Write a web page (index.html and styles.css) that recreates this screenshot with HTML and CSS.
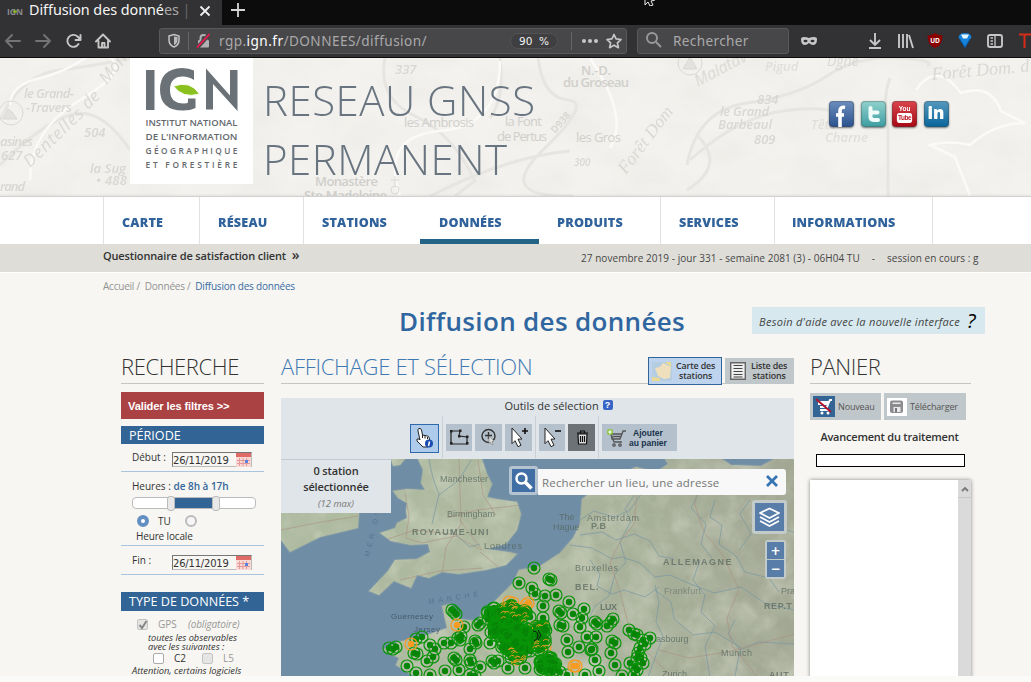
FILE: index.html
```html
<!DOCTYPE html>
<html lang="fr">
<head>
<meta charset="utf-8">
<title>Diffusion des données</title>
<link rel="stylesheet" href="styles.css">
</head>
<body>
<div class="tabs">
  <div class="tab">
    <svg class="favicon" width="18" height="11"><text x="0" y="9" font-size="9.500" textLength="16" lengthAdjust="spacingAndGlyphs" fill="#8a8c8e" font-weight="700">IGN</text><ellipse cx="8" cy="5.500" rx="2" ry="1.200" fill="#8cbf1f"/></svg>
    <span class="tab-title">Diffusion des donné<i>es</i> <b>|</b></span>
    <svg class="tab-close" width="12" height="12"><path d="M1.500 1.500l9 9M10.500 1.500l-9 9" stroke="#eee" stroke-width="1.800"/></svg>
  </div>
  <svg class="tab-new" width="14" height="14"><path d="M7 0v14M0 7h14" stroke="#d5d5d5" stroke-width="1.800"/></svg>
  <svg class="pointer" width="12" height="6" viewBox="0 0 12 6"><path d="M1-8V5l3-3 2 4 3-1-2-4 4-1z" fill="#111" stroke="#eee"/></svg>
</div>
<div class="toolbar">
  <svg class="navicons" width="120" height="32" viewBox="0 25 120 32" fill="none" stroke-width="1.900" stroke-linecap="round" stroke-linejoin="round">
    <g stroke="#737375"><path d="M20 41H6m6-6-6 6 6 6M36 41h14m-6-6 6 6-6 6"/></g>
    <g stroke="#c6c6c7"><path d="M78.500 44a6 6 0 1 1-1-7.500l2.500 2.500M80.500 35v5h-5"/><path d="M96 41.500l7-7 7 7M98.500 41v6.500h9.500V41M102 47v-4h2.500v4"/></g>
  </svg>
  <div class="urlbar">
    <svg width="50" height="26" viewBox="160 28 50 26" fill="none"><path d="M169 36l5-1.500 5 1.500v4q0 5-5 7-5-2-5-7z" stroke="#c4c4c5" stroke-width="1.500"/><path d="M174 36.500v8.500q3.500-1.500 3.500-5v-3z" fill="#bbb"/><path d="M188.500 32v18" stroke="#666669"/><rect x="198" y="40" width="11" height="7.500" rx="1" fill="#b1b1b3"/><path d="M200.500 40v-2a3 3 0 0 1 6 0v2" stroke="#b1b1b3" stroke-width="2"/><path d="M197 48L209.500 34" stroke="#474749" stroke-width="4"/><path d="M197 47.500L209.500 34" stroke="#f4164f" stroke-width="1.700"/></svg>
    <span class="url">rgp.<b>ign.fr</b>/DONNEES/diffusion/</span>
    <span class="zoom">90&nbsp; %</span>
    <svg class="urlend" width="56" height="26" viewBox="568 28 56 26"><path d="M571.500 32v18" stroke="#666669"/><g fill="#c6c6c7"><circle cx="584" cy="41" r="2"/><circle cx="590" cy="41" r="2"/><circle cx="596" cy="41" r="2"/></g><path d="M614 34.500l2.100 4.400 4.900.6-3.600 3.300 1 4.900-4.400-2.500-4.400 2.500 1-4.900-3.600-3.300 4.900-.6z" fill="none" stroke="#c6c6c7" stroke-width="1.700" stroke-linejoin="round"/></svg>
  </div>
  <div class="searchbar"><svg width="18" height="18" fill="none" stroke="#98989a" stroke-width="2"><circle cx="7" cy="7" r="5"/><path d="M11 11l5 5"/></svg><span>Rechercher</span></div>
  <svg class="extras" width="241" height="32" viewBox="790 25 241 32" fill="none" stroke="#c6c6c7" stroke-width="1.900">
    <path d="M801 39q0-2 3-2 3 0 5 1 2-1 5-1 3 0 3 2 0 6-4 6-2 0-4-2-2 2-4 2-4 0-4-6z" fill="#c6c6c7" stroke="none"/><ellipse cx="805.500" cy="41" rx="2" ry="1.200" fill="#323234" stroke="none"/><ellipse cx="812.500" cy="41" rx="2" ry="1.200" fill="#323234" stroke="none"/>
    <path d="M875 33v12m-5-5 5 5 5-5M869 48h12M899 34v14M903 34v14M907 34v14M909 35l4 13"/>
    <path d="M935 33q4 2.500 7.500 2.500 0 10-7.500 12.500-7.500-2.500-7.500-12.500Q931 35.500 935 33z" fill="#8a0000" stroke="none"/><text x="935" y="43" text-anchor="middle" font-size="6.500" font-weight="700" fill="#fff" stroke="none">UD</text>
    <path d="M958.500 37q1-4 6.500-4t6.500 4l-6.500 11z" fill="#1682db" stroke="none"/><path d="M961 34.500h8l-2 4h-4z" fill="#e6f6ff" stroke="none"/><path d="M959.500 39l5.500 8.500 5-8.500" stroke="#075098" stroke-width="1"/>
    <rect x="988" y="35" width="14" height="12" rx="2"/><path d="M995 35v12M990.500 38h2.500M990.500 41h2.500M990.500 44h2.500" stroke-width="1.300"/>
    <path d="M1019 34.500h12M1024.500 34v14" stroke="#d72b18" stroke-width="2"/>
  </svg>
</div>
<header class="banner">
  <svg class="relief" width="1031" height="138" viewBox="0 58 1031 138" aria-hidden="true">
    <defs><filter id="paper" x="0" y="0" width="100%" height="100%"><feTurbulence type="fractalNoise" baseFrequency=".018 .03" numOctaves="4" seed="6"/><feColorMatrix values="0 0 0 0 .5  0 0 0 0 .5  0 0 0 0 .47  .6 0 0 0 -.22"/></filter></defs>
    <rect y="58" width="1031" height="138" fill="#f3f2ee"/><rect y="58" width="1031" height="138" filter="url(#paper)" opacity=".3"/>
    <g fill="none" stroke="#e6e5e1" stroke-width="3"><path d="M0 120Q20 75 60 70T130 58M0 165Q40 125 70 115T130 150M385 58q-8 40 30 58t60 65l-20 15M500 58q5 40-10 60M538 58q5 40 30 42t-25 50 30 46M430 196q80-40 140-45M687 165q10-55 60-62t80-27 70-18 30 8M890 78q-8 20-2 50v68"/><path d="M690 160q50-45 100-50t50 10M687 190q40-25 10-55"/></g>
    <g fill="none" stroke="#fbfaf8" stroke-width="2.500"><path d="M10 105Q10 85 40 78t60-30M30 180Q30 130 80 100t30-42M400 196q-20-60 40-65t60-70M916 90q20-30 45 3 30-10 40 18l24 12q-30 0-55 22-20-5-40 0l25 12 15 39M590 58q40 60 20 90"/></g>
    <g fill="#d4d3cf" font-style="italic" font-size="13" font-weight="600" opacity=".85"><text x="24" y="98" textLength="50">le Grand-</text><text x="26" y="112" textLength="46">-Travers</text><text x="84" y="137">504</text><text x="1" y="160">627</text><text x="96" y="185" textLength="31">• 488</text><text x="90" y="173" textLength="36">la Sug</text><text x="0" y="191" textLength="25">rand</text><text x="0" y="146" textLength="33">asines</text><text x="395" y="74">337</text><text x="757" y="104">834</text><text x="720" y="116" textLength="49">le Grand</text><text x="718" y="129" textLength="54">Barbeaul</text><text x="754" y="144">809</text><text x="574" y="166" font-size="10">300</text><text x="765" y="71" opacity=".7">Pigud</text><text x="811" y="129" opacity=".7">Tête</text><text x="825" y="142" opacity=".7">Charne</text></g>
    <g fill="#d0cfcb" font-size="13" font-weight="600"><text x="581" y="75" textLength="30">N.-D.</text><text x="563" y="87" textLength="66">du Groseau</text><text x="404" y="127" font-weight="400" textLength="70">les Ambrosis</text><text x="505" y="126" font-weight="400" textLength="37">la Font</text><text x="497" y="141" font-weight="400" textLength="50">de Pertus</text><text x="576" y="142" font-weight="400" textLength="45">les Gros</text><text x="315" y="186" textLength="63">Monastère</text><text x="304" y="200" textLength="83">Ste-Madeleine</text></g>
    <g fill="#cfcecA" font-style="italic" font-size="17" opacity=".7"><text transform="translate(30 168) rotate(-44)" letter-spacing="1">Dentelles</text><text transform="translate(88 110) rotate(-44)">de</text><text transform="translate(107 85) rotate(-52)">Mont</text><text transform="translate(626 175) rotate(-53)" font-family="Liberation Serif" font-size="18">Forêt Dom</text><text transform="translate(698 87) rotate(-28)" font-size="16">Malatav</text><text transform="translate(932 80) rotate(-5)" textLength="98" font-family="Liberation Serif" font-size="18">Forêt Dom. d</text><text x="827" y="66" font-size="14">Dgne</text><text transform="translate(555 134) rotate(-48)" font-size="10" font-style="normal" font-weight="700">D938</text></g>
    <g fill="#e3e2de" stroke="#d9d8d4"><circle cx="11" cy="113" r="12" fill="none"/><path d="M3 119l5-10 4 3 5 7z"/><circle cx="690" cy="63" r="12" fill="none"/><path d="M683 69l7-12 7 12z"/><circle cx="395" cy="190" r="4" fill="none"/><path d="M395 176v10M391 180h8"/></g>
  </svg>
  <div class="brand">
    <svg width="123" height="126" viewBox="130 58 123 126" fill="#6b7277"><path d="M146 70h8.500v40H146zM206 68.500l24 27V70h7.500v41L213 84v25.500h-7z"/><path d="M194 80q-5-3.500-11-3.500-13 0-13 13.500t14 13.500q3 0 4-1V98.500h7.500v9.500q-5 2.500-12.500 2.500-23 0-23-21 0-20.500 22-21.500 7 0 12 2.500z"/><path d="M173.500 86q17-6 26 8-17 5-26-8z" fill="#8bc11f" stroke="#fff" stroke-width="1"/><g class="brand-lines"><text x="145.500" y="126.200" textLength="92" lengthAdjust="spacingAndGlyphs">INSTITUT NATIONAL</text><text x="145.500" y="140" textLength="92" lengthAdjust="spacingAndGlyphs">DE L'INFORMATION</text><text x="145.500" y="153.700" textLength="92">GÉOGRAPHIQUE</text><text x="145.500" y="167.500" textLength="92">ET FORESTIÈRE</text></g></svg>
  </div>
  <h1>RESEAU GNSS<br>PERMANENT</h1>
  <div class="social">
    <span class="facebook"><svg width="25" height="26"><path d="M16 6.500q-5-1-5 3.500v16M7 14h8" fill="none" stroke="#fff" stroke-width="3.600"/></svg></span>
    <span class="twitter"><svg width="25" height="26"><path d="M9.500 7v9q0 3 4 3h3.500M9.500 11.500h7" fill="none" stroke="#effcfa" stroke-width="4" stroke-linecap="round"/></svg></span>
    <span class="youtube"><i>You</i><em>Tube</em></span>
    <span class="linkedin">in</span>
  </div>
</header>
<nav class="menu"><a class="m1">CARTE</a><a class="m2">RÉSEAU</a><a class="m3">STATIONS</a><a class="m4 active">DONNÉES</a><a class="m5">PRODUITS</a><a class="m6">SERVICES</a><a class="m7">INFORMATIONS</a></nav>
<div class="infobar"><b>Questionnaire de satisfaction client <span>»</span></b><p><span class="date">27 novembre 2019 - jour 331 - semaine 2081 (3) - 06H04 TU</span><span class="dash">-</span><span class="session">session en cours : g</span></p></div>
<main>
  <div class="crumbs"><span>Accueil / &nbsp;Données / &nbsp;</span><a>Diffusion des données</a></div>
  <div class="heading"><h2>Diffusion des données</h2><div class="help"><span>Besoin d'aide avec la nouvelle interface</span><b>?</b></div></div>
  <div class="columns">
    <aside class="filters">
      <h3>RECHERCHE</h3>
      <button class="apply">Valider les filtres &gt;&gt;</button>
      <h4>PÉRIODE</h4>
      <div class="daterow"><label>Début :</label><div class="date-input"><span>26/11/2019</span><svg width="15" height="14"><path fill="#f9d9d6" d="M0 0h15v14H0z"/><path fill="#e06a66" d="M0 0h15v4H0z"/><path d="M1 7.500h13M1 10.500h13M3.500 5v8M7 5v8M10.500 5v8" stroke="#e39a98"/><path fill="#5a83df" d="M9 7h3v3H9z"/></svg></div></div>
      <div class="hours"><p>Heures : <b>de 8h à 17h</b></p><div class="slider"><i></i><s></s><s></s></div>
      <div class="radios"><span class="radio on"></span><label>TU</label><span class="radio"></span></div><p class="local">Heure locale</p></div>
      <div class="daterow end"><label>Fin :</label><div class="date-input"><span>26/11/2019</span><svg width="15" height="14"><path fill="#f9d9d6" d="M0 0h15v14H0z"/><path fill="#e06a66" d="M0 0h15v4H0z"/><path d="M1 7.500h13M1 10.500h13M3.500 5v8M7 5v8M10.500 5v8" stroke="#e39a98"/><path fill="#5a83df" d="M9 7h3v3H9z"/></svg></div></div>
      <h4 class="types">TYPE DE DONNÉES *</h4>
      <div class="gps"><span class="check off"><svg width="10" height="10"><path d="M1.500 5l2.500 3 4.500-7" fill="none" stroke="#888" stroke-width="2"/></svg></span><label>GPS</label><em>(obligatoire)</em></div>
      <p class="note">toutes les observables<br>avec les suivantes :</p>
      <div class="signals"><span class="check"></span><label>C2</label><span class="check off"></span><label class="dim">L5</label></div>
      <p class="warn">Attention, certains logiciels</p>
    </aside>
    <section class="display">
      <div class="section-head"><h3>AFFICHAGE ET SÉLECTION</h3>
        <button class="view chosen"><svg width="20" height="19"><path fill="#b5cde0" d="M0 0h20v19H0z"/><path d="M3 6l5-1 3-4 8 4-1 11-6 1-6-3z" fill="#f0dfbd"/><path d="M0 15l8 1v3H0zM13 0h6v5z" fill="#ead991"/></svg><span>Carte des<br>stations</span></button>
        <button class="view"><svg width="16" height="18"><path d="M.7.700h14.600v16.600H.7z" fill="#eee" stroke="#666" stroke-width="1.400"/><path d="M3.500 3.500h9M3.500 6.500h9M3.500 9.500h9M3.500 12.500h9M3.500 15h9" stroke="#444" stroke-width="1.200"/></svg><span>Liste des<br>stations</span></button>
      </div>
      <div class="tools">
        <p>Outils de sélection <i>?</i></p>
        <div class="toolrow">
          <button class="tool info"><svg width="27" height="27"><path d="M8 3.500q2-.5 2.500 1.500l1 5 5 1q2 1 2 3l.5 5-2 3h-5l-6-6q-1-3 2-2l1 1L7 6q-.5-2 1-2.500z" fill="#fff" stroke="#222"/><path d="M11.500 10v3M14 11v2.500M16.500 12v2" stroke="#222"/><circle cx="18" cy="18.500" r="4" fill="#194cae"/><path d="M18.500 16.500l-1 4.500" stroke="#fff" stroke-width="1.500"/></svg></button>
          <i class="sep"></i>
          <button class="tool poly"><svg width="26" height="27" stroke="#222" fill="none"><path d="M5 7h9l-1 5 8 1v7H5z" stroke-width="1.200"/><g fill="#222" stroke="none"><path d="M4 6h2.500v2.500H4zM13 5.500h2.500V8H13zM12 11h2.500v2.500H12zM20 11.500h2.500V14H20zM20 18h2.500v2.500H20zM4 18h2.500v2.500H4z"/></g></svg></button>
          <button class="tool circ"><svg width="27" height="27" fill="none" stroke="#333" stroke-width="1.400"><circle cx="13.500" cy="12" r="6.500"/><path d="M13.500 8v7M10 11.500h7"/><path d="M14 12l5 5-2 .5 1 3-2-.5-1-2-1 1z" fill="#ddd" stroke="#888" stroke-width=".7"/></svg></button>
          <button class="tool plus"><svg width="27" height="27"><path d="M7 4l10 11-4 .2 3 6-3 1.500-3-6-3 3z" fill="#fff" stroke="#222"/><path d="M17 7h6M20 4v6" stroke="#111" stroke-width="1.600"/></svg></button>
          <i class="sep"></i>
          <button class="tool minus"><svg width="26" height="27"><path d="M6 4l10 11-4 .2 3 6-3 1.500-3-6-3 3z" fill="#fff" stroke="#222"/><path d="M16 7h6" stroke="#111" stroke-width="1.600"/></svg></button>
          <button class="tool trash"><svg width="27" height="27" fill="none" stroke="#111" stroke-width="1.200"><path d="M10 10h9l-.5 10h-8z" fill="#ddd"/><path d="M9 9h11M12.500 8.500V7h4v1.500M12.500 12v6M14.500 12v6M16.500 12v6"/></svg></button>
          <i class="sep"></i>
          <button class="tool add"><svg width="22" height="22" fill="none" stroke="#555" stroke-width="1.300"><path d="M5 7h11l-2 5H6zM5 7l3 8h8M16 7l1-3h3M7 9.500h8"/><circle cx="8" cy="18" r="1.200"/><circle cx="14" cy="18" r="1.200"/><circle cx="4" cy="5" r="3" fill="#8cc63c" stroke="none"/><path d="M4 3.200v3.600M2.200 5h3.600" stroke="#fff" stroke-width="1.200"/></svg><span>Ajouter<br>au panier</span></button>
        </div>
      </div>
      <div class="map">
        <svg id="map" width="513" height="217" viewBox="281 459 513 217">
          <defs><linearGradient id="ground"><stop stop-color="#aebba0"/><stop offset=".45" stop-color="#adb89e"/><stop offset=".75" stop-color="#a6ae98"/><stop offset="1" stop-color="#a2a793"/></linearGradient>
          <filter id="terrain" x="0" y="0" width="100%" height="100%"><feTurbulence type="fractalNoise" baseFrequency=".05" numOctaves="5" seed="12"/><feColorMatrix values="0 0 0 0 .52  0 0 0 0 .57  0 0 0 0 .46  2.300 0 0 0 -.9"/></filter>
          <filter id="hills" x="0" y="0" width="100%" height="100%"><feTurbulence type="fractalNoise" baseFrequency=".035" numOctaves="4" seed="31"/><feColorMatrix values="0 0 0 0 .8  0 0 0 0 .83  0 0 0 0 .72  0 2.400 0 0 -1.050"/></filter>
          <clipPath id="land"><path id="coast" d="M418 459l5 11-2 13 4 7-18-1-14 2 5 7 9 5-1 8 1 7-10 5-2 5-15 5 11 8 20 4 17-1 2 8-13 7-22 1-7 11-19 20 10 4 15-14 17 7 6-13 12 3 13-6 17 2 27-4 20-5 11-11-8-2-23-3 20-5 11-14 4-16-4-12-21-3-9-2 5-13-5-10-6-18zM281 513h78l-1 15-38 9-30 15-9-12zM391 459h14l-5 6-7 1zM665 459l3 5-12 8-20-5-20 9-20 12-14 11-2 25-7 14-13 15-20 13-21 4-6 13-20 20-10 8-6 10-17-2-10-15-8 2 5 22-23 8-26 6-15 8 16 8-3 7 14 9 8 3h387V459h-31l-13 7-30-1-9-6z"/></clipPath></defs>
          <rect x="281" y="459" width="513" height="217" fill="#6f8da5"/>
          <use href="#coast" fill="url(#ground)" stroke="#8299a6" stroke-width="2"/>
          <g clip-path="url(#land)"><rect x="281" y="459" width="513" height="217" fill="url(#ground)"/><rect x="281" y="459" width="513" height="217" filter="url(#terrain)" opacity=".32"/><rect x="281" y="459" width="513" height="217" filter="url(#hills)" opacity=".35"/>
            <g fill="none" stroke="#7897a3" stroke-width=".9" opacity=".75"><path d="M429 459q3 20 10 35l-7 30M439 495l20-15 12-20M450 530l20 17 10-3M580 520l14-9 20 6 16-7 12-17 11 2 10-14 18 3 27-13M580 535l22-3 14 8 18-6 16 7 9 15 15 3M570 545l22 3 20 11 10-2 18 6 15 14 15-2 18 8 26 10 27-6 25 17 28 6M626 562l-6-20 11-21-6-12 15-22 5-20M626 562l-11 12-6 22-14 10-9 18M655 585l4 17-3 20 7 14-15 41M655 590l16 12 3 17 19 16 22-3 28 17 15-7 36 2M700 560l-7 20 12 15-4 17 14 14-10 20 5 32M715 500l-5 17 12 8-3 19 17 12 9 16 24 6 10 14M752 522l42 10M590 560l10 14-3 12 15 8 12-4 21 7 14-10M735 620l-7 14 12 16-5 26M690 470l10 20-9 18 15 16-5 20 11 14M750 500l-10 14 11 20-12 16"/></g>
            <g fill="none" stroke="#ab8b7d" stroke-width=".9" opacity=".6"><path d="M405 493l4 23-3 22 16 5 34-7 25 14M459 459l2 65-15 23-4 28M447 518l30-8 45-5M385 540l30-10 45 5M400 580l40-9 42-3M480 552l22 18M460 520l22 30M478 460l5 35 13 20M281 530l35-7 42-7M634 459l3 35-3 30-14 18-10 20 10 30 8 31 11 21 34 34M659 650l30 8 38-6 68-18M700 475l-5 30 9 27 18 22 17 35-12 29 5 28 25 30"/></g>
          </g>
          <g class="places"><text x="440" y="482" textLength="48">Manchester</text><text x="447" y="517" textLength="48">Birmingham</text><text x="412" y="535" class="country" textLength="77">ROYAUME-UNI</text><text x="484" y="549" textLength="38">Londres</text><text x="559" y="520">The</text><text x="553" y="530">Hague</text><text x="587" y="521" textLength="52">Amsterdam</text><text x="591" y="529" class="country">P.B</text><text x="575" y="571" textLength="43">Bruxelles</text><text x="575" y="590" class="country" textLength="24">BEL.</text><text x="600" y="610" textLength="17" font-weight="700">LUX</text><text x="663" y="565" class="country" textLength="69">ALLEMAGNE</text><text x="664" y="594" textLength="37" opacity=".7">Frankfurt</text><text x="656" y="642">asbourg</text><text x="721" y="656" textLength="31">Munich</text><text x="764" y="609" class="country">REP.T</text><text x="781" y="594">Pra</text><text x="769" y="678" class="country">AUT</text><text x="662" y="677">Zurich</text><text x="391" y="619" textLength="42" class="island">Guernesey</text><text x="414" y="632" textLength="26" class="island">Jersey</text><text transform="translate(429 604) rotate(-9)" class="sea" textLength="54">MANCHE</text><text transform="translate(369 557) rotate(-76)" class="sea">MER D'IR</text></g>
          <g id="stations"></g>
        </svg>
        <div class="count"><b>0 station<br>sélectionnée</b><em>(12 max)</em></div>
        <div class="finder"><span class="lens"><svg width="23" height="23" fill="none" stroke="#fff"><circle cx="9.500" cy="9.500" r="5" stroke-width="2.500"/><path d="M13.500 13.500l6 6" stroke-width="3.500"/></svg></span><span class="field">Rechercher un lieu, une adresse<svg class="clear" width="14" height="14"><path d="M2 2l10 10M12 2L2 12" stroke="#3774b4" stroke-width="2.800"/></svg></span></div>
        <div class="layers"><svg width="29" height="28" fill="none" stroke="#fff" stroke-width="1.800" stroke-linejoin="round"><path d="M14.500 5.500L24 10l-9.500 5L5 10zM5 14l9.500 5 9.500-5M5 18l9.500 5 9.500-5"/></svg></div>
        <div class="zoomer"><span>+</span><span>−</span></div>
      </div>
    </section>
    <aside class="basket">
      <h3>PANIER</h3>
      <div class="actions"><button><svg width="22" height="21"><path fill="#326496" d="M0 0h22v21H0z"/><path d="M5 6h11l-2 5H7M16 6l1-2h2M7 14h9M5 8h11" stroke="#fff" stroke-width="2" fill="none"/><circle cx="9" cy="17" r="1.500" fill="#fff"/><circle cx="15" cy="17" r="1.500" fill="#fff"/><path d="M3 3l15 13" stroke="#b0172c" stroke-width="2"/></svg><span>Nouveau</span></button><button class="save"><svg width="20" height="18"><path fill="#fff" d="M0 0h20v18H0z"/><rect x="3" y="2.500" width="13" height="12.500" rx="2" fill="#8c8c90"/><path d="M5.500 4.500h8v1.500h-8zM6.500 9h7v5h-7z" fill="#e9e9e9"/><path d="M8 10h2v4H8z" fill="#77777b"/></svg><span>Télécharger</span></button></div>
      <h5>Avancement du traitement</h5><div class="progress"></div>
      <div class="items"><div class="scroll"><svg width="13" height="18"><path d="M4 11l3-3 3 3" fill="none" stroke="#777" stroke-width="1.800"/></svg></div></div>
    </aside>
  </div>
</main>
<script src="stations.js"></script>
</body>
</html>
```
FILE: styles.css
```css
*{box-sizing:border-box}
body{margin:0;width:1031px;height:682px;overflow:hidden;background:#fafaf9;font-family:"Open Sans","Noto Sans",sans-serif;color:#333}
h1,h2,h3,h4,h5,p{margin:0;font-weight:400}
button{border:0;padding:0;margin:0;font:inherit;color:inherit}
svg{display:block;flex:none}
b{font-weight:600}
.tabs{height:25px;background:#0c0c0d;display:flex;position:relative}
.tab{width:222px;background:#323234;display:flex;align-items:flex-start;padding-left:7px}
.favicon{margin-top:6px}
.tab-title{font:14.4px/20px "Noto Sans",sans-serif;color:#f5f5f5;margin-left:4px;width:163px;white-space:nowrap;letter-spacing:-.06px}
.tab-title i{font-style:normal;color:#aaa}
.tab-title b{font-weight:400;color:#666}
.tab-close{margin:5px 0 0 7px}
.tab-new{margin:3px 0 0 9px}
.pointer{position:absolute;left:644px;top:0}
.toolbar{height:33px;background:#323234;border-bottom:1px solid #0c0c0d;display:flex}
.urlbar{margin:3px 0 0 39px;width:468px;height:26px;border:1px solid #59595b;border-radius:3px;background:#474749;display:flex;align-items:center}
.url{font:13.6px/24px "Noto Sans",sans-serif;color:#a9a9aa;margin-left:9px;width:291px;letter-spacing:.44px}
.url b{font-weight:400;color:#fff}
.zoom{width:48px;height:16px;border-radius:8px;background:#3f3f41;border:1px solid #535355;color:#f3f3f3;font:10.5px/14px "DejaVu Sans",sans-serif;text-align:center}
.urlend{margin-left:10px}
.searchbar{margin:3px 0 0 10px;width:152px;height:26px;border:1px solid #59595b;border-radius:3px;background:#474749;display:flex;align-items:center;padding-left:7px;gap:10px;color:#a9a9aa;font:13.6px "Noto Sans",sans-serif;letter-spacing:.35px;padding-bottom:2px}
.extras{margin-left:1px}
.banner{height:138px;position:relative;display:flex;padding-left:130px}
.relief{position:absolute;left:0;top:0}
.brand{width:123px;height:126px;background:#fff;position:relative}
.brand-lines{font-size:8.3px;font-weight:600;fill:#64696d}
.banner h1{position:relative;margin:12px 0 0 10px;width:566px;font-weight:300;font-size:42px;line-height:59px;color:#687480;letter-spacing:.5px}
.social{position:relative;display:flex;gap:6.500px;margin-top:43px}
.social span{width:25px;height:26px;border-radius:4px;overflow:hidden;box-shadow:inset 0 0 1px 1px #4445,0 1px 2px #777}
.facebook{background:linear-gradient(#6c8ebd,#2b528e)}
.twitter{background:linear-gradient(#91d2cd,#3e9da2)}
.youtube{background:linear-gradient(#d9454d,#a90814);color:#fff;text-align:center;font:700 8px/9px "Liberation Sans",sans-serif;padding-top:3px}
.youtube i,.youtube em{display:block;font-style:normal;transform:scaleX(.8)}
.youtube em{background:#fff;color:#bb1724;border-radius:3px;margin:0 3px;font-size:8px;line-height:10px;letter-spacing:-.5px;height:10px}
.linkedin{background:linear-gradient(#5699bf,#08659a);color:#fff;text-align:center;font-weight:800;font-size:17px;line-height:24px}
.menu{height:48px;background:#fff;border-top:1px solid #d2d1ce;box-shadow:0 -1px 2px #0001;position:relative;display:flex;padding-left:103px;font-weight:800;font-size:12.6px;letter-spacing:.2px;color:#30629b}
.menu a{border-left:1px solid #e2e2e2;padding:17px 0 0 18px;line-height:18px;height:47px}
.m1{width:96px}.m2{width:104px}.m3{width:117px}.m4{width:119px}.m5{width:121px}.m6{width:114px}.m7{width:159px;border-right:1px solid #e2e2e2}
.menu .m5{border-left:0;padding-left:18px}
.menu .m7{padding-left:17px}
.menu .active{border-bottom:5px solid #226386;border-left:0;padding-left:19px}
.infobar{height:28px;background:#deddd8;display:flex;padding:0 0 0 103px;font-size:10.5px;line-height:24px;white-space:nowrap;color:#474747}
.infobar b{width:478px;font-size:11px;color:#333;letter-spacing:-.15px}
.infobar b span{font-size:14px;line-height:12px;margin-left:3px}
.infobar p{font-size:10px;line-height:29px;display:flex}
.infobar .date,.infobar .session{letter-spacing:.05px}
.dash{margin:0 12px}
main{height:404px;background:#f7f6f2;border-top:1px solid #fff;overflow:hidden}
.crumbs{font-size:10px;line-height:14px;margin:6px 0 0 103px;color:#929292;height:14px;letter-spacing:-.22px}
.crumbs a{color:#376ca4}
.heading{height:54px;display:flex;padding-left:399px;margin-top:13px}
.heading h2{width:353px;color:#3066a0;font-weight:600;font-size:26px;line-height:30px;letter-spacing:.34px}
.help{background:#d7e9ef;width:233px;height:27px;display:flex;align-items:center;padding-left:7px;font-size:11px;font-style:italic;color:#444;white-space:nowrap;margin-top:1px}
.help span{width:208px;letter-spacing:.28px;padding-top:2px}.help b{font-size:20px;font-weight:500;line-height:26px;color:#000}
.columns{display:grid;grid-template-columns:143px 513px 161px;column-gap:17px;padding-left:121px}
.basket{margin-left:-1px;width:161px}
h3{font-size:22px;font-weight:300;height:24px;line-height:24px;border-bottom:1px solid #c5c5c2;white-space:nowrap;letter-spacing:-.4px}
.columns h3{margin-top:-6px;height:30px}
.apply{display:block;width:143px;height:27px;margin-top:8px;background:#aa4143;color:#fff;font:700 11.1px/28px "Liberation Sans",sans-serif;text-align:left;padding-left:7px;letter-spacing:-.13px}
h4{background:#326496;color:#fff;height:18px;font-size:12.600px;line-height:19px;padding-left:8px;margin-top:7px}
.daterow{height:28px;border-bottom:1px solid #a9c4df;display:flex;padding:8px 0 0 11px;font-size:10px}
.daterow label{width:40px;line-height:13px}
.date-input{width:80px;height:15px;border:1px solid #777;border-right-color:#bbb;border-bottom-color:#bbb;display:flex;font:10px/16px "DejaVu Sans",sans-serif;letter-spacing:-.2px}
.date-input span{width:64px}
.hours{height:74px;border-bottom:1px solid #a9c4df;padding:7px 0 0 11px;font-size:10px;line-height:14px}
.hours b{color:#336699;letter-spacing:-.02px}
.slider{width:124px;height:12px;border:1px solid #bbb;border-radius:4px;background:#fff;position:relative;margin-top:4px}
.slider i{position:absolute;left:39px;width:44px;height:10px;background:#326496}
.slider s{position:absolute;left:34px;top:-2px;width:8px;height:15px;border:1px solid #bbb;border-radius:3px;background:#e8e8e8}
.slider s+s{left:79px}
.radios{display:flex;height:18px;margin-top:3px;padding-left:5px;align-items:center}
.radios label{width:27px;margin-left:9px}
.radio{width:12px;height:12px;border-radius:50%;border:2px solid #bbb;background:#f6f6f6}
.radio.on{border:4px solid #648fc2;background:#fff}
.hours .local{padding-left:4px;margin-top:-1px;letter-spacing:-.15px}
.daterow.end{height:29px;padding-top:9px}
.daterow label{position:relative;top:-1px}
h4.types{margin-top:17px;height:19px;line-height:20px}
.gps{display:flex;align-items:center;height:20px;margin-top:3px;padding-left:16px;font-size:10px;color:#999}
.check{width:11px;height:11px;border:1px solid #aaa;background:#fff;border-radius:2px}
.check.off{background:#e5e5e3;border-color:#c4c4c4}
.gps label{width:30px;margin-left:10px}
.gps em{letter-spacing:-.15px}
.note{font-size:9.2px;font-style:italic;line-height:9px;padding-left:27px;height:18px;margin-top:-1px}
.signals{display:flex;align-items:center;height:14px;padding-left:32px;font-size:10px}
.signals label{width:28px;margin-left:10px}.signals .dim{color:#999}
.warn{font-size:9.3px;font-style:italic;line-height:12px;margin-left:11px;white-space:nowrap}
.section-head{display:flex;height:24px;border-bottom:1px solid #c5c5c2;gap:3px}
.section-head h3{border:0;width:364px;color:#3e79b4;letter-spacing:-.29px}
.view{width:69px;height:26px;background:#c0c7ca;display:flex;align-items:center;gap:5px;font-size:8.9px;font-weight:600;line-height:10px;padding-left:5px;margin-top:-2px;letter-spacing:-.15px}
.view.chosen{border:1px solid #30659c;background:#bed3ee;width:74px;height:28px;margin-top:-3px;padding-left:3px;gap:4px}
.tools{height:61px;background:#e0e5e9;margin-top:14px}
.tools p{text-align:center;font-size:11px;line-height:16px;padding-left:42px}
.tools p i{display:inline-block;background:#3765c5;color:#fff;border-radius:2px;width:10px;height:10px;font:700 9px/10px "Liberation Sans",sans-serif;vertical-align:2px;margin-left:1px}
.toolrow{display:flex;padding:10px 0 0 129px;height:45px}
.sep{width:7px;height:42px;margin-top:-8px;background:linear-gradient(90deg,transparent 3px,#c9d0d5 3px,#c9d0d5 4px,transparent 4px)}
.tool{height:27px;width:27px;background:#b4c0cb}
.info{height:29px;width:29px;border:1px solid #3069ab;background:#aecbec}
.poly{width:26px}.circ{margin-left:3px}.plus{margin-left:3px}.minus{width:26px}.trash{margin-left:3px;background:#6d7276}
.add{width:75px;display:flex;align-items:center;padding-left:4px;gap:1px;font:700 8.5px/10px "Liberation Sans",sans-serif;color:#17324c}
.map{position:relative;height:217px;overflow:hidden}
.places{font:9px "Liberation Sans",sans-serif;fill:#56655e;opacity:.75}
.country{font-weight:700;letter-spacing:.6px;fill:#5c6a60}
.island{font-size:8px;fill:#35495a}
.sea{font-size:7px;letter-spacing:4px;fill:#4d6c86}
.count{position:absolute;left:0;top:0;width:110px;height:54px;background:#e0e5e9;text-align:center;line-height:16px;font-size:11px;padding-top:3px;border-top:1px solid #c4cbd0}
.count b{display:block;letter-spacing:-.15px}.count em{display:block;font-size:9.4px;color:#777;line-height:17px}
.finder{position:absolute;left:228px;top:7px;height:29px;display:flex}
.lens{width:29px;height:29px;padding:3px;background:#b4c3d0;border-radius:3px}
.lens svg{background:#416fa5}
.field{display:flex;justify-content:space-between;font-size:11.5px;line-height:28px;padding:0 7px 0 4px;width:248px;background:#f8f8f8;height:26px;margin-top:3px;border-radius:0 3px 3px 0;color:#777;letter-spacing:.18px}
.clear{margin-top:5px}
.layers{position:absolute;left:471px;top:41px;width:35px;height:34px;background:#c2cbc9;border-radius:3px;padding:3px}
.layers svg{background:#587da8}
.zoomer{position:absolute;left:484px;top:81px;width:21px;height:39px;background:#c2cbc9;border-radius:3px;padding:2px;display:flex;flex-direction:column;gap:1px}
.zoomer span{height:17px;color:#fff;background:#587da8;font:700 12px/18px "DejaVu Sans",sans-serif;text-align:center}
.actions{display:flex;gap:3px;margin-top:9px}
.actions button{width:71px;height:27px;background:#c0c7ca;display:flex;align-items:center;padding-left:3px;gap:3px;font-size:9px;color:#555;letter-spacing:-.15px}
.actions .save{width:82px}
h5{font-size:11px;font-weight:600;line-height:16px;text-align:center;margin:9px 2px 0 0;letter-spacing:-.22px}
.progress{width:149px;height:13px;border:1px solid #000;background:#fff;margin:9px 0 0 6px}
.items{width:161px;height:210px;margin-top:13px;background:#fff;box-shadow:0 0 4px #888;display:flex;justify-content:flex-end}
.scroll{width:13px;background:#dadada}
.scroll svg{border-bottom:1px solid #c8c8c8}
.ring{fill:none;stroke:#099409;stroke-width:1.200}.dot{fill:#078507}.alt .ring{stroke:#f89b22}.alt .dot{fill:#f89b22}
```
FILE: stations.js
```js
const ns = "http://www.w3.org/2000/svg";
const layer = document.getElementById("stations");
function station(x, y, alt) {
  const g = document.createElementNS(ns, "g");
  if (alt) g.setAttribute("class", "alt");
  [["ring", 6], ["dot", 3.2]].forEach(([name, r]) => {
    const c = document.createElementNS(ns, "circle");
    c.setAttribute("class", name);
    c.setAttribute("cx", x);
    c.setAttribute("cy", y);
    c.setAttribute("r", r);
    g.appendChild(c);
  });
  layer.appendChild(g);
}
const orange = [[411,644],[457,625],[513,603],[526,605],[517,659],[574,666],[576,666],[509,602],[528,603],[545,647],[535,627],[502,610]];
const points = [[534,568],[519,583],[532,588],[535,594],[549,579],[551,580],[452,610],[454,612],[456,614],[464,627],[478,625],[480,623],[389,648],[393,649],[396,647],[416,639],[422,637],[414,653],[417,654],[407,666],[416,673],[427,661],[430,645],[435,649],[433,657],[444,643],[451,643],[458,638],[460,640],[461,636],[475,641],[476,643],[470,649],[490,643],[454,658],[456,660],[470,660],[471,663],[480,667],[492,661],[494,663],[498,661],[445,671],[459,670],[430,675],[470,675],[475,676],[508,668],[545,596],[556,595],[543,606],[569,602],[584,609],[573,614],[582,618],[559,611],[561,613],[530,617],[543,618],[560,625],[563,626],[580,627],[595,622],[597,624],[607,626],[613,619],[611,622],[587,637],[596,637],[567,640],[568,652],[579,647],[592,649],[591,650],[612,641],[615,643],[611,653],[629,630],[634,634],[637,635],[643,640],[650,638],[645,644],[640,648],[638,653],[637,658],[641,658],[630,663],[635,667],[643,663],[637,670],[615,665],[595,660],[599,671],[560,672],[567,675],[585,675],[622,676],[634,676],[525,668]];
points.forEach(p => station(p[0], p[1]));
orange.forEach(p => station(p[0], p[1], true));
let seed = 17;
const random = () => (seed = (seed * 16807) % 2147483647) / 2147483647;
// Dense areas: centre x, centre y, radius x, radius y, station count
[[492,614,5,8,14],[511,612,16,7,34],[508,630,18,13,60],[519,640,20,14,55],[540,637,8,13,28],[515,651,12,9,18],[547,665,10,9,30]].forEach(([x, y, rx, ry, n]) => {
  for (let i = 0; i < n; i++) {
    const a = random() * Math.PI * 2, r = Math.sqrt(random());
    station(x + Math.cos(a) * r * rx, y + Math.sin(a) * r * ry);
  }
});
function arc(x, y) {
  const c = document.createElementNS(ns, "path");
  c.setAttribute("d", `M${x} ${y}q2-3 5-1`);
  c.setAttribute("stroke", "#e39a22");
  c.setAttribute("fill", "none");
  layer.appendChild(c);
}
for (let i = 0; i < 20; i++) arc(498 + random() * 28, 602 + random() * 20);
for (let i = 0; i < 14; i++) arc(506 + random() * 16, 648 + random() * 16);
for (let i = 0; i < 10; i++) arc(532 + random() * 14, 622 + random() * 28);
const mark = document.createElementNS(ns, "path");
mark.setAttribute("d", "M533 631q5 0 5 5 0 3-4 5M538 630l3 5-3 5");
mark.setAttribute("stroke", "#111");
mark.setAttribute("fill", "none");
layer.appendChild(mark);
```
